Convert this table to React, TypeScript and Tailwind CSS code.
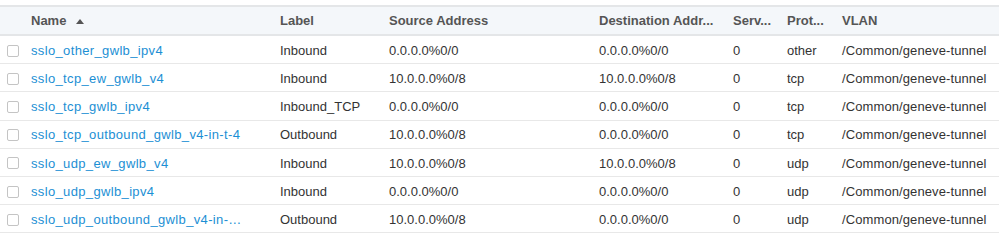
const rows = [
  { name: 'sslo_other_gwlb_ipv4', label: 'Inbound', src: '0.0.0.0%0/0', dst: '0.0.0.0%0/0', port: '0', proto: 'other' },
  { name: 'sslo_tcp_ew_gwlb_v4', label: 'Inbound', src: '10.0.0.0%0/8', dst: '10.0.0.0%0/8', port: '0', proto: 'tcp' },
  { name: 'sslo_tcp_gwlb_ipv4', label: 'Inbound_TCP', src: '0.0.0.0%0/0', dst: '0.0.0.0%0/0', port: '0', proto: 'tcp' },
  { name: 'sslo_tcp_outbound_gwlb_v4-in-t-4', label: 'Outbound', src: '10.0.0.0%0/8', dst: '0.0.0.0%0/0', port: '0', proto: 'tcp' },
  { name: 'sslo_udp_ew_gwlb_v4', label: 'Inbound', src: '10.0.0.0%0/8', dst: '10.0.0.0%0/8', port: '0', proto: 'udp' },
  { name: 'sslo_udp_gwlb_ipv4', label: 'Inbound', src: '0.0.0.0%0/0', dst: '0.0.0.0%0/0', port: '0', proto: 'udp' },
  { name: 'sslo_udp_outbound_gwlb_v4-in-…', label: 'Outbound', src: '10.0.0.0%0/8', dst: '0.0.0.0%0/0', port: '0', proto: 'udp' },
];

const cols = 'grid grid-cols-[31px_249px_109px_210px_134px_54px_55px_1fr] items-center';

const App = () => {
  return (
    <div className="w-[999px] h-[249px] bg-white pt-[5px] text-[13px] text-[#333] font-['Liberation_Sans',Arial,sans-serif] overflow-hidden">
      <div className={`${cols} h-[31px] pt-[1px] bg-[#f4f7fa] border-t-2 border-b-2 border-[#e4e6e8] font-bold text-[#555]`}>
        <div />
        <div className="flex items-center gap-[10px]">
          <span>Name</span>
          <svg width="8" height="5" viewBox="0 0 8 5" className="mt-[1px]">
            <path d="M0 5 L4 0 L8 5 Z" fill="#555" />
          </svg>
        </div>
        <div>Label</div>
        <div>Source Address</div>
        <div className="whitespace-nowrap overflow-hidden">Destination Addr...</div>
        <div className="whitespace-nowrap">Serv...</div>
        <div className="whitespace-nowrap">Prot...</div>
        <div>VLAN</div>
      </div>
      {rows.map((r) => (
        <div key={r.name + r.proto} className={`${cols} h-[28.2px] pt-[2px] border-b border-[#e8e8e8]`}>
          <div className="pl-[7px] flex items-center">
            <span className="w-[12px] h-[12px] border border-[#c4c4c4] rounded-[2px] bg-white" />
          </div>
          <div className="pr-[30px] whitespace-nowrap overflow-hidden tracking-[0.35px] text-[#1c8fd4]">{r.name}</div>
          <div>{r.label}</div>
          <div>{r.src}</div>
          <div>{r.dst}</div>
          <div>{r.port}</div>
          <div>{r.proto}</div>
          <div className="whitespace-nowrap tracking-[0.1px]">/Common/geneve-tunnel</div>
        </div>
      ))}
    </div>
  );
};

export default App;
